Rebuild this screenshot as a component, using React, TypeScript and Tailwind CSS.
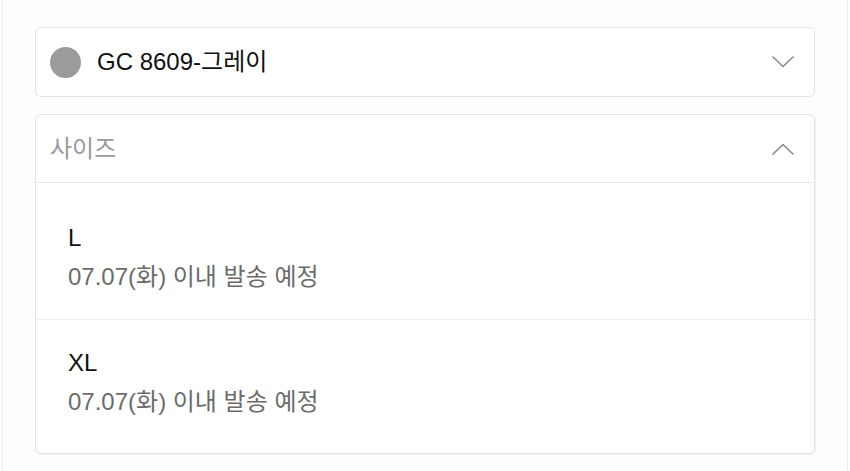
import React from 'react';

const FONT = { fontFamily: '"Liberation Sans", "Noto Sans CJK KR", sans-serif' };

const sizes = [
    { label: 'L', note: '07.07(화) 이내 발송 예정' },
    { label: 'XL', note: '07.07(화) 이내 발송 예정' },
];

function Chevron({ up }: { up?: boolean }) {
    return (
        <svg width="22" height="12" viewBox="0 0 22 12" fill="none" className="shrink-0">
            <path
                d={up ? 'M1 11 L11 1.5 L21 11' : 'M1 1 L11 10.5 L21 1'}
                stroke="#8a8a8a"
                strokeWidth="1.6"
                strokeLinecap="round"
                strokeLinejoin="round"
            />
        </svg>
    );
}

export default function App() {
    return (
        <div className="w-full h-[471px] bg-white overflow-hidden" style={FONT}>
            <div className="mx-[2px] h-full border-x border-[#eeeeee] bg-[#fdfdfd] px-8 pt-[27px]">
                {/* Color select */}
                <div className="flex items-center h-[70px] pl-[14px] pr-[20px] bg-white border border-[#e3e3e3] rounded-[6px]">
                    <div className="w-[31px] h-[31px] rounded-full bg-[#9b9b9b] shrink-0" />
                    <span className="ml-[16px] flex-1 text-[24px] text-[#111111] leading-none">GC 8609-그레이</span>
                    <Chevron />
                </div>

                {/* Size select (open) */}
                <div className="mt-[17px] bg-white border border-[#e3e3e3] rounded-[6px] shadow-[1px_1px_1px_rgba(0,0,0,0.06)]">
                    <div className="flex items-center h-[68px] pl-[14px] pr-[20px] border-b border-[#e6e6e6]">
                        <span className="flex-1 text-[24px] text-[#9a9a9a] leading-none">사이즈</span>
                        <Chevron up />
                    </div>
                    <div className="pt-[12px] pb-[9px]">
                        {sizes.map((s, i) => (
                            <div
                                key={s.label}
                                className={`px-[32px] py-[23px] ${i > 0 ? 'border-t border-[#f0f0f0]' : ''}`}
                            >
                                <p className="text-[24px] leading-[39px] text-[#111111]">{s.label}</p>
                                <p className="text-[24px] leading-[39px] text-[#6b6b6b]">{s.note}</p>
                            </div>
                        ))}
                    </div>
                </div>
            </div>
        </div>
    );
}
